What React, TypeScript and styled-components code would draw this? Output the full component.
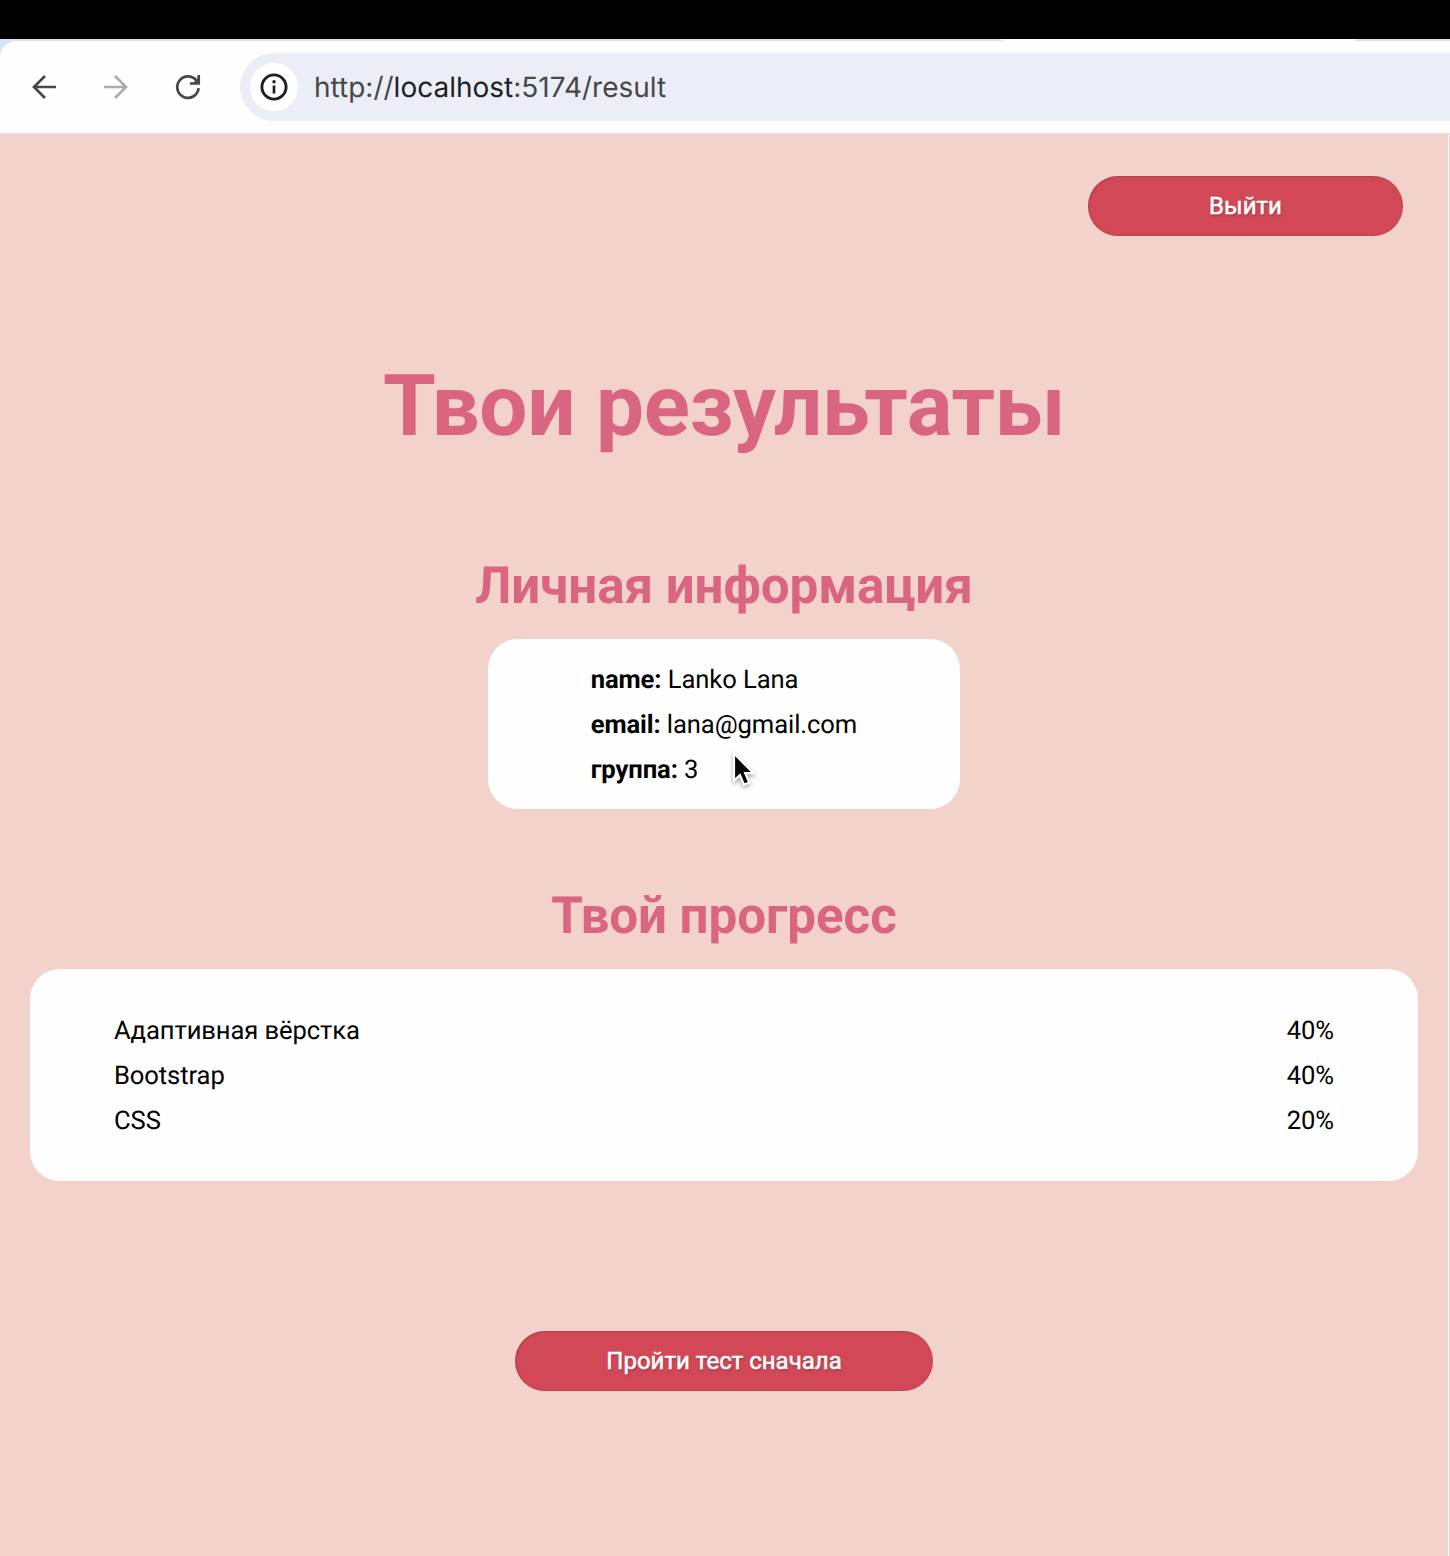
import React from "react";
import styled, { createGlobalStyle } from "styled-components";

const GlobalStyle = createGlobalStyle`
  * { box-sizing: border-box; }
  body {
    margin: 0;
    background: #f3d2cb;
    font-family: Roboto, "Liberation Sans", sans-serif;
    color: #000;
    text-rendering: geometricPrecision;
  }
`;

const Screen = styled.div`
  width: 1450px;
  height: 1556px;
  overflow: hidden;
  display: flex;
  flex-direction: column;
`;

const TopBand = styled.div`
  height: 39px;
  flex: none;
  background: #000;
`;

const TabStrip = styled.div`
  height: 2px;
  flex: none;
  display: flex;
  background: #d6e1fb;
`;

const ActiveTab = styled.div`
  width: 356px;
  height: 2px;
  margin-left: 1001px;
  background: #fefefe;
  border-radius: 0 0 8px 8px / 0 0 2px 2px;
`;

const ToolbarBack = styled.div`
  flex: none;
  background: #d6e1fb;
`;

const Toolbar = styled.div`
  height: 94px;
  display: flex;
  align-items: center;
  padding-left: 28px;
  background: #fefefe;
  border-bottom: 2px solid #e1dfdd;
  border-top-left-radius: 16px;
`;

const NavButton = styled.button<{ $color: string }>`
  width: 32px;
  height: 32px;
  margin-right: 40px;
  padding: 0;
  border: 0;
  background: none;
  color: ${(p) => p.$color};
  svg { display: block; }
`;

const AddressBar = styled.div`
  flex: 1;
  height: 68px;
  margin-left: -4px;
  padding-left: 10px;
  display: flex;
  align-items: center;
  background: #ebeef6;
  border-radius: 34px 0 0 34px;
`;

const SiteInfo = styled.div`
  width: 48px;
  height: 48px;
  margin-right: 16px;
  display: grid;
  place-items: center;
  border-radius: 50%;
  background: #fefefe;
  svg { display: block; }
`;

const Url = styled.div`
  padding-bottom: 1px;
  font: 400 28px/32px Inter, "Liberation Sans", sans-serif;
  color: #474747;
  white-space: nowrap;
`;

const Host = styled.span`
  color: #1f1f1f;
`;

const Page = styled.main`
  width: 1449px;
  flex: 1;
  display: flex;
  flex-direction: column;
  align-items: center;
  padding: 41px 30px 0;
  background: #f3d2cb;
  border-right: 1px solid #fefefe;
`;

const PillButton = styled.button<{ $width: number }>`
  width: ${(p) => p.$width}px;
  height: 60px;
  flex: none;
  padding: 0;
  border: 0;
  border-radius: 30px;
  background: #d24856;
  box-shadow: inset 1px 1px 2px rgba(70, 50, 50, 0.28), inset 0 -1px 1px rgba(110, 50, 50, 0.12);
  color: #fff;
  font: 400 24px/28px Roboto, sans-serif;
  -webkit-text-stroke: 0.5px #fff;
  text-shadow: 1px 2px 2px rgba(70, 50, 60, 0.35);
`;

const Header = styled.header`
  width: 100%;
  display: flex;
  justify-content: flex-end;
  padding-right: 15px;
`;

const Title = styled.h1`
  margin: 120px 0 0;
  font-size: 85.4px;
  line-height: 100px;
  font-weight: 700;
  letter-spacing: -0.35px;
  color: #da6580;
  white-space: nowrap;
`;

const Section = styled.section<{ $top: number; $full?: boolean }>`
  width: ${(p) => (p.$full ? "100%" : "auto")};
  margin-top: ${(p) => p.$top}px;
  display: flex;
  flex-direction: column;
  align-items: center;
`;

const SectionTitle = styled.h2`
  margin: 0 0 23px;
  font-size: 51.2px;
  line-height: 60px;
  font-weight: 700;
  letter-spacing: -0.1px;
  color: #da6580;
  white-space: nowrap;
`;

const InfoCard = styled.div`
  width: 472px;
  height: 170px;
  padding: 19px 0 0 102.7px;
  border-radius: 30px;
  background: #fefefe;
`;

const ProgressCard = styled.div`
  width: 100%;
  height: 212px;
  padding: 40px 84px 0;
  border-radius: 30px;
  background: #fefefe;
`;

const Row = styled.div`
  display: flex;
  justify-content: space-between;
  font-size: 25.6px;
  line-height: 45px;
  letter-spacing: -0.1px;
`;

const InfoLine = styled.p`
  margin: 0;
  font-size: 25.6px;
  line-height: 45px;
  letter-spacing: -0.09px;
  white-space: nowrap;
`;

const Label = styled.b`
  font-weight: 700;
`;

const Footer = styled.footer`
  margin-top: 150px;
`;

const Pointer = styled.svg`
  position: absolute;
  left: 726px;
  top: 748px;
  filter: drop-shadow(0 2px 2px rgba(0, 0, 0, 0.35));
`;

const topics = [
  { name: "Адаптивная вёрстка", score: 40 },
  { name: "Bootstrap", score: 40 },
  { name: "CSS", score: 20 },
];

const profile = [
  { label: "name:", value: "Lanko Lana" },
  { label: "email:", value: "lana@gmail.com" },
  { label: "группа:", value: "3" },
];

const ArrowIcon = ({ flip }: { flip?: boolean }) => (
  <svg width="32" height="32" viewBox="0 0 32 32" fill="none" stroke="currentColor" strokeWidth="2.7">
    <g transform={flip ? "translate(32 0) scale(-1 1)" : undefined}>
      <path d="M28 16H6M17 5 6 16l11 11" />
    </g>
  </svg>
);

const ReloadIcon = () => (
  <svg width="32" height="32" viewBox="0 0 32 32" fill="none" stroke="currentColor" strokeWidth="2.7">
    <path d="M26.6 17.2A10.7 10.7 0 1 1 24.4 9.6L26 12" />
    <path d="M26.7 4v8.5H18" />
    <path d="M27 6v7h-7z" fill="currentColor" stroke="none" />
  </svg>
);

const InfoIcon = () => (
  <svg width="28" height="28" viewBox="0 0 28 28" fill="none" stroke="#1f1f1f" strokeWidth="2.9">
    <circle cx="14" cy="14" r="12.1" />
    <path d="M14 12.5v8" strokeWidth="2.7" />
    <circle cx="14" cy="8.7" r="1.7" fill="#1f1f1f" stroke="none" />
  </svg>
);

export default function App() {
  return (
    <Screen>
      <GlobalStyle />
      <TopBand />
      <TabStrip>
        <ActiveTab />
      </TabStrip>
      <ToolbarBack>
        <Toolbar>
          <NavButton $color="#474747" aria-label="Back"><ArrowIcon /></NavButton>
          <NavButton $color="#ababab" aria-label="Forward"><ArrowIcon flip /></NavButton>
          <NavButton $color="#474747" aria-label="Reload"><ReloadIcon /></NavButton>
          <AddressBar>
            <SiteInfo><InfoIcon /></SiteInfo>
            <Url>http://<Host>localhost</Host>:5174/result</Url>
          </AddressBar>
        </Toolbar>
      </ToolbarBack>
      <Page>
        <Header>
          <PillButton $width={315}>Выйти</PillButton>
        </Header>
        <Title>Твои результаты</Title>
        <Section $top={100}>
          <SectionTitle>Личная информация</SectionTitle>
          <InfoCard>
            {profile.map((p) => (
              <InfoLine key={p.label}><Label>{p.label}</Label> {p.value}</InfoLine>
            ))}
          </InfoCard>
        </Section>
        <Section $top={77} $full>
          <SectionTitle>Твой прогресс</SectionTitle>
          <ProgressCard>
            {topics.map((t) => (
              <Row key={t.name}><span>{t.name}</span><span>{t.score}%</span></Row>
            ))}
          </ProgressCard>
        </Section>
        <Footer>
          <PillButton $width={418}>Пройти тест сначала</PillButton>
        </Footer>
      </Page>
      <Pointer width="36" height="46" viewBox="0 0 36 46">
        <path
          d="M8 5.5v27l5.9-5.4 4.1 9.6 5.2-2.2-4-9.3h8.3z"
          fill="#000"
          stroke="#fff"
          strokeWidth="2.2"
        />
      </Pointer>
    </Screen>
  );
}
